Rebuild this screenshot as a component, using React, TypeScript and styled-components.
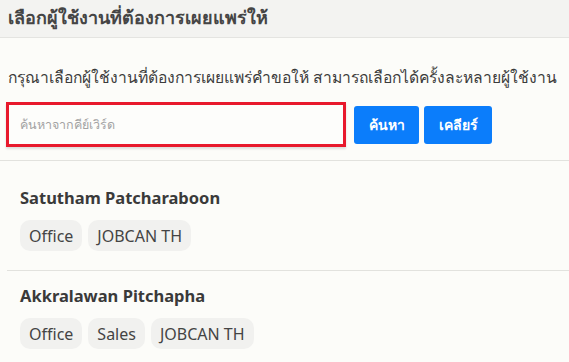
import styled, { createGlobalStyle } from 'styled-components';

type User = {
  name: string;
  tags: string[];
};

const users: User[] = [
  { name: 'Satutham Patcharaboon', tags: ['Office', 'JOBCAN TH'] },
  { name: 'Akkralawan Pitchapha', tags: ['Office', 'Sales', 'JOBCAN TH'] },
];

const GlobalStyle = createGlobalStyle`
  html, body {
    margin: 0;
    padding: 0;
    background-color: #fcfcf9;
    font-family: "Noto Sans", "Open Sans", sans-serif;
    color: #3c3c3c;
  }
`;

export default function App() {
  return (
    <>
      <GlobalStyle />
      <Page>
        <Header>
          <Title>เลือกผู้ใช้งานที่ต้องการเผยแพร่ให้</Title>
        </Header>
        <Intro>
          กรุณาเลือกผู้ใช้งานที่ต้องการเผยแพร่คำขอให้ สามารถเลือกได้ครั้งละหลายผู้ใช้งาน
        </Intro>
        <SearchRow>
          <SearchInput placeholder="ค้นหาจากคีย์เวิร์ด" />
          <Button>ค้นหา</Button>
          <Button>เคลียร์</Button>
        </SearchRow>
        <UserList>
          {users.map((user) => (
            <UserItem key={user.name}>
              <UserName>{user.name}</UserName>
              <TagRow>
                {user.tags.map((tag) => (
                  <Tag key={tag}>{tag}</Tag>
                ))}
              </TagRow>
            </UserItem>
          ))}
        </UserList>
      </Page>
    </>
  );
}

const Page = styled.div`
  width: 569px;
  height: 362px;
  overflow: hidden;
`;

const Header = styled.header`
  box-sizing: border-box;
  height: 38px;
  display: flex;
  align-items: center;
  padding: 0 0 2px 8px;
  background-color: #f3f3f1;
  border-bottom: 1px solid #e4e4e1;
`;

const Title = styled.h1`
  margin: 0;
  font-size: 18px;
  font-weight: 600;
  color: #454545;
`;

const Intro = styled.p`
  margin: 28px 0 0 8px;
  font-size: 15.7px;
  line-height: 22px;
  color: #3c3c3c;
`;

const SearchRow = styled.div`
  display: flex;
  align-items: center;
  gap: 5px;
  margin: 14px 0 0 6px;
  height: 45px;
`;

const SearchInput = styled.input`
  box-sizing: border-box;
  width: 340px;
  height: 45px;
  margin-right: 3px;
  padding: 0 11px;
  border: 3px solid #e8192c;
  background-color: #fdfdfb;
  box-shadow: 0 2px 2px rgba(0, 0, 0, 0.12);
  font-family: inherit;
  font-size: 12.5px;
  color: #333;
  outline: none;

  &::placeholder {
    color: #a3a3a3;
  }
`;

const Button = styled.button`
  height: 38px;
  padding: 0 14px 0 15px;
  border: none;
  border-radius: 3px;
  background-color: #0b7dfb;
  color: #ffffff;
  font-family: inherit;
  font-size: 14px;
  font-weight: 600;
`;

const UserList = styled.div`
  margin-top: 13px;
  padding-top: 12px;
  border-top: 1px solid #e2e2de;
`;

const UserItem = styled.div`
  margin-left: 7px;
  padding: 14px 0 19px 13px;
  border-bottom: 1px solid #e2e2de;
`;

const UserName = styled.div`
  font-size: 16.5px;
  font-weight: 700;
  line-height: 22px;
  color: #3a3a3a;
`;

const TagRow = styled.div`
  display: flex;
  gap: 6px;
  margin-top: 11px;
`;

const Tag = styled.span`
  height: 31px;
  display: flex;
  align-items: center;
  padding: 0 9px;
  border-radius: 10px;
  background-color: #f1f1ef;
  font-size: 16px;
  color: #444;
`;
